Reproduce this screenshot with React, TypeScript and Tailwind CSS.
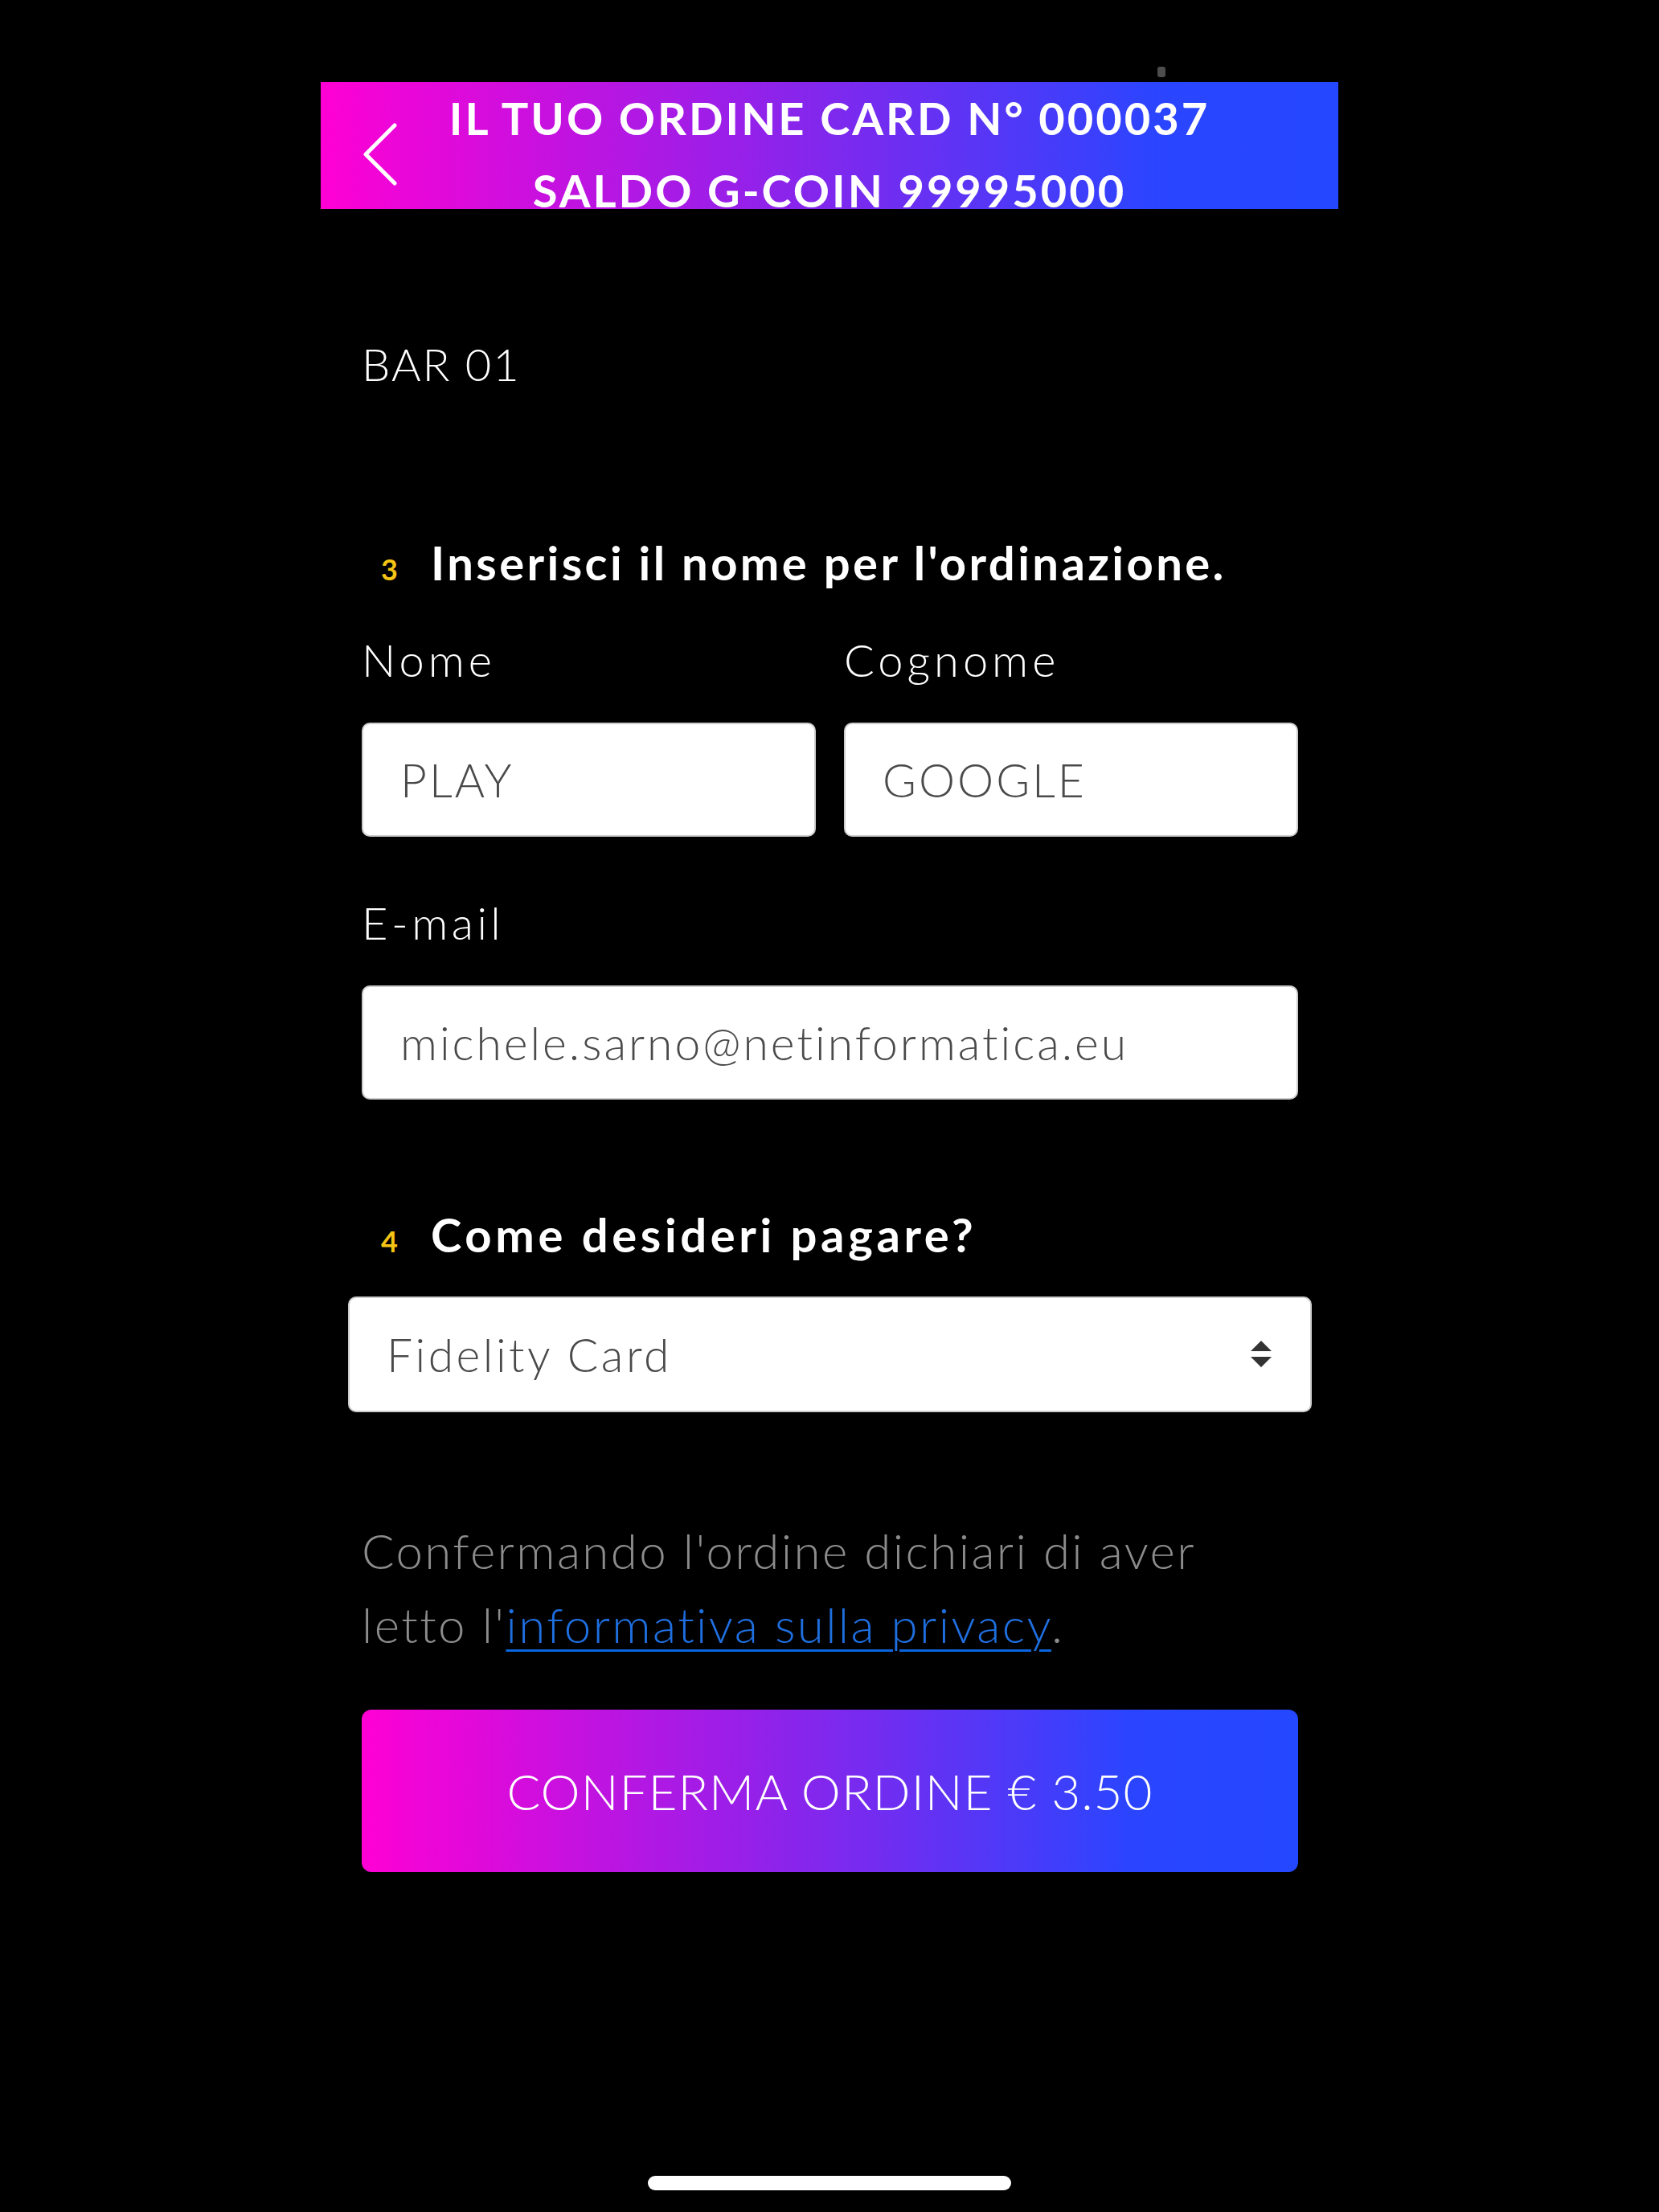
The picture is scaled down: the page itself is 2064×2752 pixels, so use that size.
import React from "react"

function BackChevron() {
  return (
    <svg width="44" height="78" viewBox="0 0 44 78" fill="none">
      <polyline
        points="40,3 4,39 40,75"
        stroke="#ffffff"
        strokeWidth="5"
        strokeLinecap="round"
        strokeLinejoin="round"
      />
    </svg>
  )
}

function SelectArrows() {
  return (
    <svg width="28" height="34" viewBox="0 0 28 34">
      <polygon points="1,13 14,0 27,13" fill="#333333" />
      <polygon points="1,20 27,20 14,33" fill="#333333" />
    </svg>
  )
}

function StepTitle({
  n,
  tracking,
  children,
}: {
  n: string
  tracking: string
  children: React.ReactNode
}) {
  return (
    <div className="flex items-baseline pl-[24px] leading-none">
      <span className="w-[62px] text-[36px] font-bold text-[#f5c414]">{n}</span>
      <span className={`text-[58px] font-bold text-white ${tracking}`}>{children}</span>
    </div>
  )
}

function Field({ value }: { value: string }) {
  return (
    <div className="flex h-[142px] items-center rounded-[10px] border-2 border-[#cccccc] bg-white px-[46px] text-[57px] font-light leading-none tracking-[3px] text-[#4a4a4a]">
      {value}
    </div>
  )
}

export default function App() {
  return (
    <div className="min-h-[2752px] w-full bg-black font-['Lato','Noto_Sans',sans-serif]">
      <div className="mx-auto w-[1266px]">
        {/* status area */}
        <div className="h-[102px] pl-[1041px] pt-[83px]">
          <div className="h-[13px] w-[10px] rounded-[3px] bg-[#4d4d4d]" />
        </div>

        {/* header */}
        <div className="grid h-[158px] grid-cols-[1fr_auto_1fr] overflow-hidden bg-[linear-gradient(90deg,#ff00d4_0%,#9a1fe8_40%,#2b45ff_82%,#2448ff_100%)]">
          <div className="self-center pl-[52px]">
            <BackChevron />
          </div>
          <div className="text-center text-[56px] font-bold leading-[90px] tracking-[3px] text-white">
            <div>IL TUO ORDINE CARD N° 000037</div>
            <div>SALDO G-COIN 99995000</div>
          </div>
          <div />
        </div>

        {/* form */}
        <div className="pl-[51px] pr-[50px]">
          <div className="mt-[165px] text-[56px] font-light leading-none tracking-[2px] text-white">
            BAR 01
          </div>

          <div className="mt-[190px]">
            <StepTitle n="3" tracking="tracking-[3.4px]">
              Inserisci il nome per l'ordinazione.
            </StepTitle>
          </div>

          <div className="mt-[64px] grid grid-cols-2 gap-x-[35px]">
            <div className="text-[56px] font-light leading-none tracking-[5px] text-white">Nome</div>
            <div className="text-[56px] font-light leading-none tracking-[5px] text-white">Cognome</div>
            <div className="mt-[50px]">
              <Field value="PLAY" />
            </div>
            <div className="mt-[50px]">
              <Field value="GOOGLE" />
            </div>
          </div>

          <div className="mt-[79px] text-[56px] font-light leading-none tracking-[4.5px] text-white">
            E-mail
          </div>
          <div className="mt-[50px]">
            <Field value="michele.sarno@netinformatica.eu" />
          </div>

          <div className="mt-[139px]">
            <StepTitle n="4" tracking="tracking-[4.6px]">
              Come desideri pagare?
            </StepTitle>
          </div>

          <div className="-mx-[17px] mt-[48px] flex h-[144px] items-center justify-between rounded-[10px] border-2 border-[#cccccc] bg-white pl-[46px] pr-[47px] text-[57px] font-light leading-none tracking-[3.5px] text-[#4a4a4a]">
            <span>Fidelity Card</span>
            <SelectArrows />
          </div>

          <p className="mt-[126px] text-[60px] font-light leading-[92px] tracking-[2.4px] text-[#8c8c8c]">
            Confermando l'ordine dichiari di aver
            <br />
            letto l'
            <a
              href="#"
              className="text-[#1f6fe0] underline decoration-[#0a66e0] decoration-[3px] underline-offset-[8px]"
            >
              informativa sulla privacy
            </a>
            .
          </p>

          <button className="mt-[60px] flex h-[202px] w-full items-center justify-center rounded-[12px] bg-[linear-gradient(90deg,#ff00d4_0%,#9a1fe8_40%,#2b45ff_82%,#2448ff_100%)] text-[62px] font-light leading-none tracking-[1px] text-white">
            CONFERMA ORDINE € 3.50
          </button>
        </div>

        <div className="mx-auto mt-[378px] h-[18px] w-[452px] rounded-full bg-white" />
      </div>
    </div>
  )
}
